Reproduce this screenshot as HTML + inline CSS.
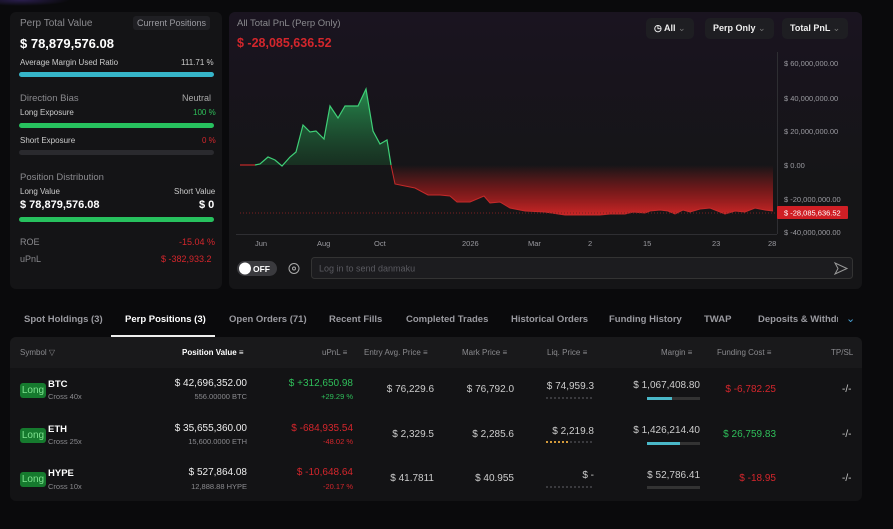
<!DOCTYPE html>
<html><head><meta charset="utf-8"><style>
*{margin:0;padding:0;box-sizing:border-box}
body{width:893px;height:529px;background:#0a0a0c;font-family:"Liberation Sans",sans-serif;color:#ddd;position:relative;overflow:hidden;font-size:9px}
.a{position:absolute;white-space:nowrap}
.panel{position:absolute;background:#151517;border-radius:6px}
.g{color:#8a8a8e}
.w{color:#fff;font-weight:bold}
.red{color:#d4262c}
.grn{color:#2fbf5a}
.bar{position:absolute;height:5px;border-radius:3px}
.btn{position:absolute;background:#1e1e22;border-radius:5px;color:#eee;font-weight:bold;font-size:9px;padding:5px 8px}
.r{text-align:right}
.th{position:absolute;top:348px;font-size:8px;color:#8a8a8e;white-space:nowrap}
.long{position:absolute;left:20px;width:26px;height:15px;background:#167a2e;color:#7ee28f;border-radius:3px;font-size:10px;text-align:center;line-height:15px}
.dots{position:absolute;height:2px;width:48px;background:repeating-linear-gradient(90deg,#3a3a3e 0 2px,transparent 2px 4px)}
</style></head><body>
<div class="a" style="left:0;top:0;width:70px;height:6px;background:radial-gradient(ellipse at 30% 0,#2a1e4e,transparent 70%)"></div>
<!-- left panel -->
<div class="panel" style="left:10px;top:12px;width:212px;height:277px;background:#141416"></div>
<div class="a g" style="left:20px;top:18px;font-size:10px">Perp Total Value</div>
<div class="a" style="left:133px;top:16px;background:#1f1f23;border-radius:3px;padding:2px 4px;font-size:9px;color:#9a9aa0">Current Positions</div>
<div class="a w" style="left:20px;top:36px;font-size:13px">$ 78,879,576.08</div>
<div class="a" style="left:20px;top:58px;font-size:8px;color:#ccc">Average Margin Used Ratio</div>
<div class="a" style="left:181px;top:58px;font-size:8px;color:#ccc">111.71 %</div>
<div class="bar" style="left:19px;top:72px;width:195px;background:#36b5c9"></div>
<div class="a g" style="left:20px;top:93px;font-size:9.5px">Direction Bias</div>
<div class="a" style="left:182px;top:93px;font-size:9px;color:#aaa">Neutral</div>
<div class="a" style="left:20px;top:108px;font-size:8px;color:#ccc">Long Exposure</div>
<div class="a grn" style="left:193px;top:108px;font-size:8px">100 %</div>
<div class="bar" style="left:19px;top:123px;width:195px;background:#27c15e"></div>
<div class="a" style="left:20px;top:136px;font-size:8px;color:#ccc">Short Exposure</div>
<div class="a red" style="left:202px;top:136px;font-size:8px">0 %</div>
<div class="bar" style="left:19px;top:150px;width:195px;background:#2a2a2e"></div>
<div class="a g" style="left:20px;top:172px;font-size:9.5px">Position Distribution</div>
<div class="a" style="left:20px;top:187px;font-size:8px;color:#ccc">Long Value</div>
<div class="a" style="left:174px;top:187px;font-size:8px;color:#ccc">Short Value</div>
<div class="a w" style="left:20px;top:199px;font-size:11px">$ 78,879,576.08</div>
<div class="a w" style="left:199px;top:199px;font-size:11px">$ 0</div>
<div class="bar" style="left:19px;top:217px;width:195px;background:#27c15e"></div>
<div class="a g" style="left:20px;top:237px;font-size:9px">ROE</div>
<div class="a red" style="left:179px;top:237px;font-size:9px">-15.04 %</div>
<div class="a g" style="left:20px;top:254px;font-size:9px">uPnL</div>
<div class="a red" style="left:161px;top:254px;font-size:9px">$ -382,933.2</div>
<!-- chart panel -->
<div class="panel" style="left:229px;top:12px;width:633px;height:277px;background:linear-gradient(180deg,#1a1420 0%,#151517 60%)"></div>
<div class="a g" style="left:237px;top:18px;font-size:9.5px">All Total PnL (Perp Only)</div>
<div class="a red" style="left:237px;top:36px;font-size:12.5px;font-weight:bold">$ -28,085,636.52</div>
<div class="btn" style="left:646px;top:18px">&#9719; All <span style="color:#777;font-weight:normal">&#8964;</span></div>
<div class="btn" style="left:705px;top:18px">Perp Only <span style="color:#777;font-weight:normal">&#8964;</span></div>
<div class="btn" style="left:782px;top:18px">Total PnL <span style="color:#777;font-weight:normal">&#8964;</span></div>
<svg class="a" style="left:0;top:0" width="893" height="300">
<defs>
<linearGradient id="gg" x1="0" y1="88" x2="0" y2="165" gradientUnits="userSpaceOnUse"><stop offset="0" stop-color="#2aa85a" stop-opacity=".8"/><stop offset="1" stop-color="#1a4a2a" stop-opacity=".5"/></linearGradient>
<linearGradient id="rg" x1="0" y1="165" x2="0" y2="215" gradientUnits="userSpaceOnUse"><stop offset="0" stop-color="#d02020" stop-opacity="0"/><stop offset=".5" stop-color="#c01c1c" stop-opacity=".55"/><stop offset="1" stop-color="#e02828" stop-opacity=".9"/></linearGradient>
</defs>
<path d="M240,165 L255,165 260,164 268,157 275,160 282,166 290,157 296,152 303,125 310,132 316,131 324,139 330,106 338,118 345,106 358,106 366,89 373,131 380,144 387,140 391,165 Z" fill="url(#gg)"/>
<path d="M391,165 L395,184 405,186 415,188 428,195 440,195 450,196 457,202 470,202 484,196 490,203 500,202 510,208 525,211 545,212 565,215 580,215 600,215 610,214 625,214 633,212 645,213 650,211 660,210 668,211 675,214 683,210 690,212 700,209 710,208 715,210 725,214 735,211 745,212 755,208 765,210 773,211 773,165 Z" fill="url(#rg)"/>
<polyline fill="none" stroke="#3fcf77" stroke-width="1.2" points="255,165 260,164 268,157 275,160 282,166 290,157 296,152 303,125 310,132 316,131 324,139 330,106 338,118 345,106 358,106 366,89 373,131 380,144 387,140 391,165"/>
<polyline fill="none" stroke="#c42a2a" stroke-width="1.2" points="240,165 255,165"/>
<polyline fill="none" stroke="#c42a2a" stroke-width="1" points="391,165 395,184 405,186 415,188 428,195 440,195 450,196 457,202 470,202 484,196 490,203 500,202 510,208 525,211 545,212 565,215 580,215 600,215 610,214 625,214 633,212 645,213 650,211 660,210 668,211 675,214 683,210 690,212 700,209 710,208 715,210 725,214 735,211 745,212 755,208 765,210 773,211"/>
<line x1="240" y1="213" x2="777" y2="213" stroke="#7a2020" stroke-dasharray="1,2"/>
<line x1="777.5" y1="52" x2="777.5" y2="234" stroke="#2e2e32"/>
<line x1="236" y1="234.5" x2="777" y2="234.5" stroke="#2e2e32"/>
<g fill="#9a9aa0" font-size="7.5" font-family="Liberation Sans">
<text x="784" y="66">$ 60,000,000.00</text><text x="784" y="101">$ 40,000,000.00</text><text x="784" y="134">$ 20,000,000.00</text><text x="784" y="168">$ 0.00</text><text x="784" y="202">$ -20,000,000.00</text><text x="784" y="235">$ -40,000,000.00</text>
<text x="255" y="246">Jun</text><text x="317" y="246">Aug</text><text x="374" y="246">Oct</text><text x="462" y="246">2026</text><text x="528" y="246">Mar</text><text x="588" y="246">2</text><text x="643" y="246">15</text><text x="712" y="246">23</text><text x="768" y="246">28</text>
</g>
<rect x="777" y="206" width="71" height="13" fill="#d01f25" rx="1"/>
<text x="784" y="215.5" fill="#fff" font-size="7.5" font-family="Liberation Sans">$ -28,085,636.52</text>
<rect x="237" y="261" width="40" height="15" rx="7.5" fill="#3a3a3e"/>
<circle cx="245" cy="268.5" r="6" fill="#fff"/>
<text x="253" y="272" fill="#fff" font-size="8.5" font-weight="bold" font-family="Liberation Sans">OFF</text>
<circle cx="294" cy="268.5" r="5" fill="none" stroke="#aaa" stroke-width="1"/><circle cx="294" cy="268.5" r="1.5" fill="none" stroke="#aaa"/>
<rect x="311.5" y="257.5" width="541" height="21" rx="3" fill="#1c1c1f" stroke="#333"/>
<text x="319" y="271.5" fill="#5a5a60" font-size="9" font-family="Liberation Sans">Log in to send danmaku</text>
<path d="M835,263 L847,268.5 835,274 838,268.5 Z" fill="none" stroke="#999" stroke-width="1"/>
</svg>
<!-- tabs -->
<div class="a" style="left:24px;top:314px;font-size:9.5px;color:#9a9aa0;font-weight:bold">Spot Holdings (3)</div>
<div class="a" style="left:125px;top:314px;font-size:9.5px;color:#fff;font-weight:bold">Perp Positions (3)</div>
<div class="a" style="left:111px;top:335px;width:104px;height:2px;background:#eee"></div>
<div class="a" style="left:229px;top:314px;font-size:9.5px;color:#9a9aa0;font-weight:bold">Open Orders (71)</div>
<div class="a" style="left:329px;top:314px;font-size:9.5px;color:#9a9aa0;font-weight:bold">Recent Fills</div>
<div class="a" style="left:406px;top:314px;font-size:9.5px;color:#9a9aa0;font-weight:bold">Completed Trades</div>
<div class="a" style="left:511px;top:314px;font-size:9.5px;color:#9a9aa0;font-weight:bold">Historical Orders</div>
<div class="a" style="left:609px;top:314px;font-size:9.5px;color:#9a9aa0;font-weight:bold">Funding History</div>
<div class="a" style="left:704px;top:314px;font-size:9.5px;color:#9a9aa0;font-weight:bold">TWAP</div>
<div class="a" style="left:758px;top:314px;width:80px;overflow:hidden;font-size:9.5px;color:#9a9aa0;font-weight:bold">Deposits &amp; Withdrawals</div>
<div class="a" style="left:846px;top:312px;font-size:11px;color:#4aa3d8">&#8964;</div>
<!-- table -->
<div class="panel" style="left:10px;top:337px;width:852px;height:164px;background:#131315"></div>
<div class="a" style="left:10px;top:337px;width:852px;height:31px;background:#19191b;border-radius:6px 6px 0 0"></div>
<div class="th" style="left:20px">Symbol &#9661;</div>
<div class="th" style="left:182px;color:#fff;font-weight:bold">Position Value &#8801;</div>
<div class="th" style="left:322px">uPnL &#8801;</div>
<div class="th" style="left:364px">Entry Avg. Price &#8801;</div>
<div class="th" style="left:462px">Mark Price &#8801;</div>
<div class="th" style="left:547px">Liq. Price &#8801;</div>
<div class="th" style="left:661px">Margin &#8801;</div>
<div class="th" style="left:717px">Funding Cost &#8801;</div>
<div class="th" style="left:831px">TP/SL</div>

<div class="long" style="top:383px">Long</div>
<div class="a w" style="left:48px;top:379px;font-size:9.5px">BTC</div>
<div class="a g" style="left:48px;top:392px;font-size:7.5px">Cross 40x</div>
<div class="a r" style="right:646px;top:378px;font-size:10px;color:#eee">$ 42,696,352.00</div>
<div class="a r g" style="right:646px;top:392px;font-size:7.5px">556.00000 BTC</div>
<div class="a r grn" style="right:540px;top:378px;font-size:10px">$ +312,650.98</div>
<div class="a r grn" style="right:540px;top:392px;font-size:7.5px">+29.29 %</div>
<div class="a r" style="right:459px;top:384px;font-size:10px;color:#ccc">$ 76,229.6</div>
<div class="a r" style="right:379px;top:384px;font-size:10px;color:#ccc">$ 76,792.0</div>
<div class="a r" style="right:299px;top:381px;font-size:10px;color:#ccc">$ 74,959.3</div>
<div class="dots" style="left:546px;top:397px"></div>
<div class="a r" style="right:193px;top:380px;font-size:10px;color:#ccc">$ 1,067,408.80</div>
<div class="a" style="left:647px;top:397px;width:53px;height:3px;background:#333"><div style="width:25px;height:3px;background:#4ab8c8"></div></div>
<div class="a r red" style="right:117px;top:384px;font-size:10px">$ -6,782.25</div>
<div class="a" style="left:842px;top:384px;font-size:10px;color:#ccc">-/-</div>

<div class="long" style="top:428px">Long</div>
<div class="a w" style="left:48px;top:424px;font-size:9.5px">ETH</div>
<div class="a g" style="left:48px;top:437px;font-size:7.5px">Cross 25x</div>
<div class="a r" style="right:646px;top:423px;font-size:10px;color:#eee">$ 35,655,360.00</div>
<div class="a r g" style="right:646px;top:437px;font-size:7.5px">15,600.0000 ETH</div>
<div class="a r red" style="right:540px;top:423px;font-size:10px">$ -684,935.54</div>
<div class="a r red" style="right:540px;top:437px;font-size:7.5px">-48.02 %</div>
<div class="a r" style="right:459px;top:429px;font-size:10px;color:#ccc">$ 2,329.5</div>
<div class="a r" style="right:379px;top:429px;font-size:10px;color:#ccc">$ 2,285.6</div>
<div class="a r" style="right:299px;top:426px;font-size:10px;color:#ccc">$ 2,219.8</div>
<div class="dots" style="left:546px;top:441px"></div>
<div class="a" style="left:546px;top:441px;height:2px;width:24px;background:repeating-linear-gradient(90deg,#d39a3a 0 2px,transparent 2px 4px)"></div>
<div class="a r" style="right:193px;top:425px;font-size:10px;color:#ccc">$ 1,426,214.40</div>
<div class="a" style="left:647px;top:442px;width:53px;height:3px;background:#333"><div style="width:33px;height:3px;background:#4ab8c8"></div></div>
<div class="a r grn" style="right:117px;top:429px;font-size:10px">$ 26,759.83</div>
<div class="a" style="left:842px;top:429px;font-size:10px;color:#ccc">-/-</div>

<div class="long" style="top:472px">Long</div>
<div class="a w" style="left:48px;top:468px;font-size:9.5px">HYPE</div>
<div class="a g" style="left:48px;top:482px;font-size:7.5px">Cross 10x</div>
<div class="a r" style="right:646px;top:467px;font-size:10px;color:#eee">$ 527,864.08</div>
<div class="a r g" style="right:646px;top:482px;font-size:7.5px">12,888.88 HYPE</div>
<div class="a r red" style="right:540px;top:467px;font-size:10px">$ -10,648.64</div>
<div class="a r red" style="right:540px;top:482px;font-size:7.5px">-20.17 %</div>
<div class="a r" style="right:459px;top:473px;font-size:10px;color:#ccc">$ 41.7811</div>
<div class="a r" style="right:379px;top:473px;font-size:10px;color:#ccc">$ 40.955</div>
<div class="a r" style="right:299px;top:470px;font-size:10px;color:#ccc">$ -</div>
<div class="dots" style="left:546px;top:486px"></div>
<div class="a r" style="right:193px;top:470px;font-size:10px;color:#ccc">$ 52,786.41</div>
<div class="a" style="left:647px;top:486px;width:53px;height:3px;background:#333"></div>
<div class="a r red" style="right:117px;top:473px;font-size:10px">$ -18.95</div>
<div class="a" style="left:842px;top:473px;font-size:10px;color:#ccc">-/-</div>
</body></html>
